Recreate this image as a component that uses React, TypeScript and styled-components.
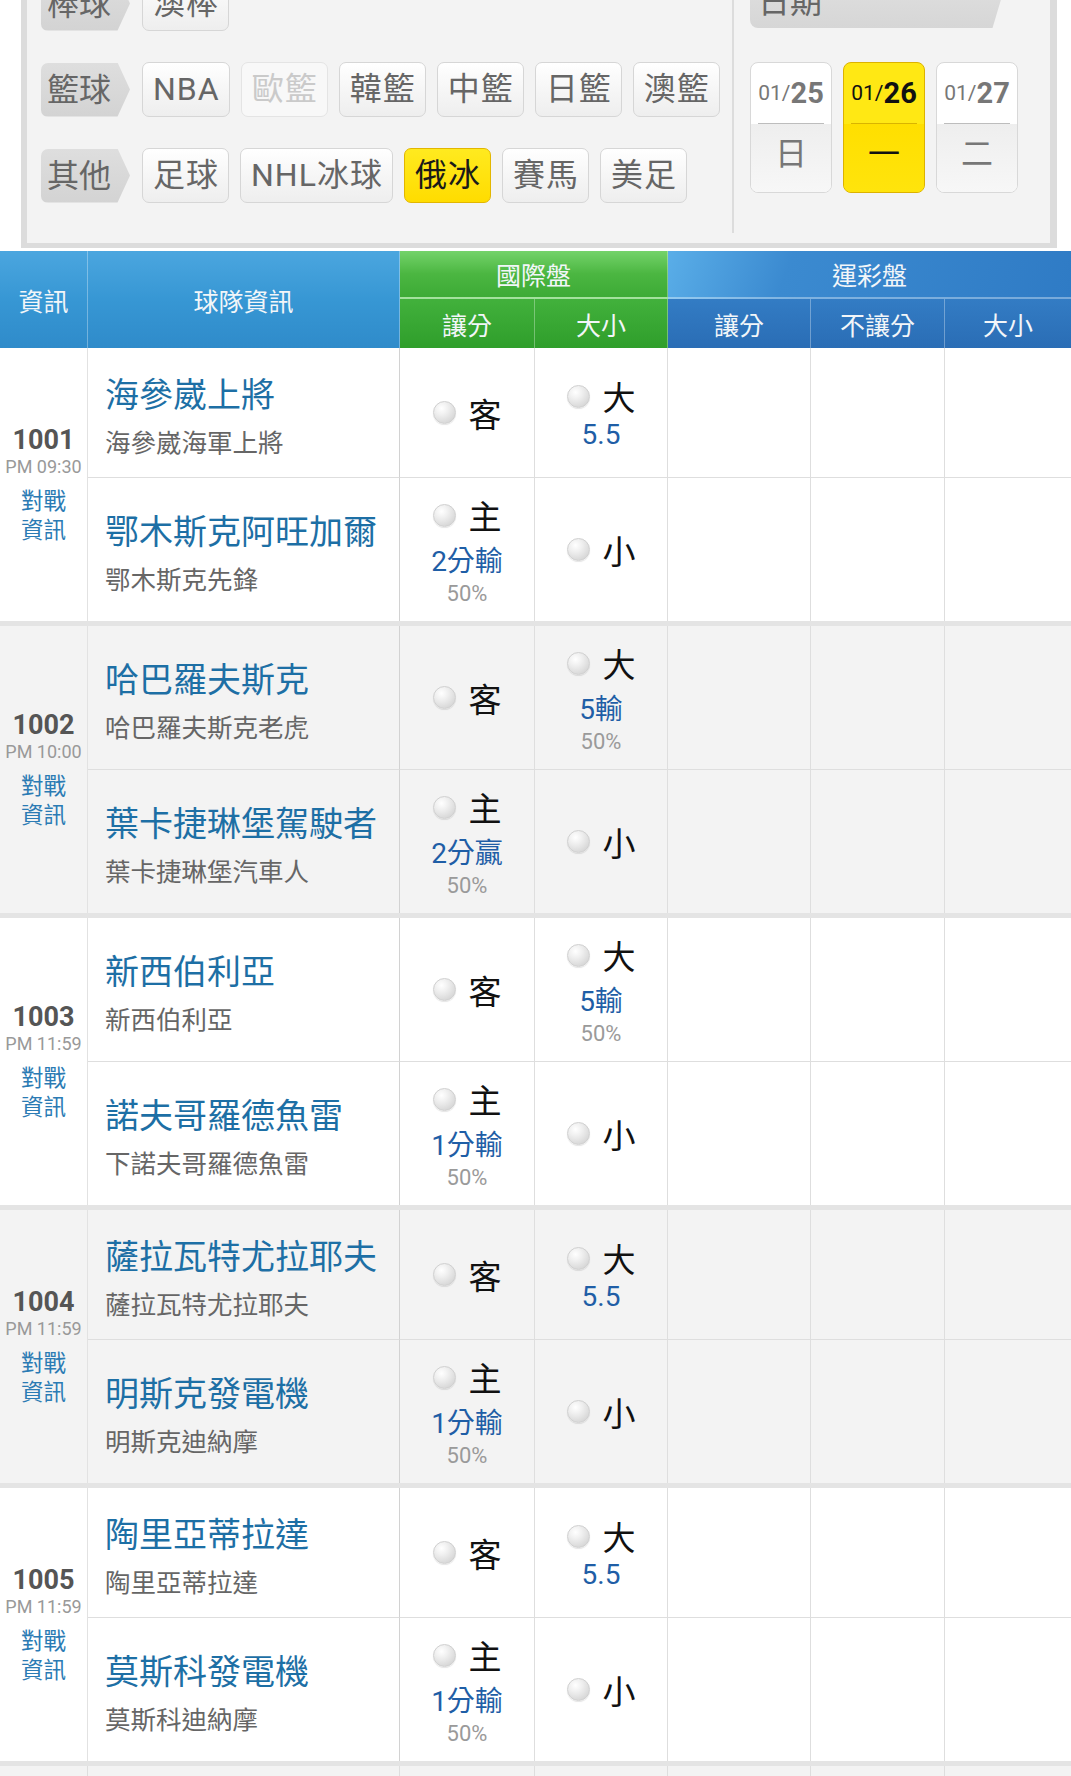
import React from 'react';
import styled, { createGlobalStyle, css } from 'styled-components';

const GlobalStyle = createGlobalStyle`
  html, body {
    margin: 0;
    padding: 0;
    background: #fff;
  }
  body {
    font-family: Roboto, "Noto Sans CJK TC", sans-serif;
    overflow: hidden;
  }
  * {
    box-sizing: border-box;
  }
`;

const COLS = '88px 312px 135px 133px 143px 134px 126px';

type BtnState = 'normal' | 'disabled' | 'active';

const Page = styled.div`
  width: 1071px;
`;

/* ---------- filter panel ---------- */

const FilterPanel = styled.div`
  display: flex;
  margin: -40px 14px 3px 21px;
  padding: 16px 0 10px;
  background: #f3f3f3;
  border-style: solid;
  border-color: #dcdcdc;
  border-width: 0 7px 5px 6px;
`;

const SportArea = styled.div`
  flex: 0 0 705px;
  display: flex;
  flex-direction: column;
  gap: 31px;
  padding: 0 0 30px 14px;
`;

const SportRow = styled.div`
  display: flex;
  align-items: center;
  gap: 11px;
  height: 55px;
`;

const RowLabel = styled.div`
  width: 89px;
  height: 54px;
  margin-right: 1px;
  padding-left: 6px;
  background: linear-gradient(#dedede, #d3d3d3);
  border-radius: 7px 0 0 7px;
  clip-path: polygon(0 0, 86% 0, 100% 50%, 86% 100%, 0 100%);
  color: #666;
  font-size: 32px;
  line-height: 54px;
  white-space: nowrap;
`;

const SportButton = styled.div<{ $state?: BtnState }>`
  height: 55px;
  padding: 0 9px 0 10px;
  border: 1px solid #d6d6d6;
  border-radius: 7px;
  background: linear-gradient(#ffffff, #f6f6f6 50%, #eeeeee);
  color: #666;
  font-size: 32px;
  letter-spacing: 1px;
  line-height: 53px;
  white-space: nowrap;

  ${(p) =>
    p.$state === 'disabled' &&
    css`
      color: #cacaca;
      border-color: #e4e4e4;
      background: #f8f8f8;
    `}

  ${(p) =>
    p.$state === 'active' &&
    css`
      color: #1a1a1a;
      border-color: #e2b600;
      background: linear-gradient(#ffea1f, #ffdc00);
    `}
`;

const DateArea = styled.div`
  flex: 1;
  display: flex;
  flex-direction: column;
  gap: 34px;
  padding-left: 16px;
  border-left: 2px solid #dcdcdc;
`;

const DateLabel = styled.div`
  width: 258px;
  height: 52px;
  padding-left: 8px;
  background: linear-gradient(#e0e0e0, #d6d6d6);
  border-radius: 0 0 0 8px;
  clip-path: polygon(0 0, 100% 0, 94% 100%, 0 100%);
  color: #666;
  font-size: 32px;
  line-height: 52px;
`;

const DateList = styled.div`
  display: flex;
  gap: 11px;
`;

const DateButton = styled.div<{ $active?: boolean }>`
  width: 82px;
  height: 131px;
  display: flex;
  flex-direction: column;
  overflow: hidden;
  border: 1px solid #d8d8d8;
  border-radius: 8px;
  background: #fff;
  color: #777;

  ${(p) =>
    p.$active &&
    css`
      border-color: #dcb200;
      background: #ffe814;
      color: #111;
    `}
`;

const DateTop = styled.div`
  height: 60px;
  display: flex;
  align-items: center;
  justify-content: center;
  font-size: 21px;

  b {
    font-size: 29px;
    font-weight: 700;
    color: inherit;
  }
`;

const DateRule = styled.div<{ $active?: boolean }>`
  height: 1px;
  margin: 0 7px;
  background: ${(p) => (p.$active ? '#d9b400' : '#bdbdbd')};
`;

const DateBottom = styled.div<{ $active?: boolean }>`
  flex: 1;
  display: flex;
  align-items: center;
  justify-content: center;
  padding-bottom: 14px;
  font-size: 32px;
  background: ${(p) =>
    p.$active ? 'linear-gradient(#ffdf00, #ffe40c)' : 'linear-gradient(#eeeeee, #f7f7f7)'};
`;

/* ---------- table ---------- */

type Tone = 'blue' | 'green' | 'greenSub' | 'navy' | 'navySub';

const toneBg: Record<Tone, string> = {
  blue: 'linear-gradient(#4ba6df, #3797d4 50%, #2f8bca)',
  green: 'linear-gradient(#74d36a, #4bb641 50%, #3dab36)',
  greenSub: 'linear-gradient(#42b13c, #2f9e2b)',
  navy: 'linear-gradient(110deg, #5aaee8, #3b8ad0 30%, #2f7bc5)',
  navySub: 'linear-gradient(#337cc4, #2a6db5)',
};

const HeadGrid = styled.div`
  display: grid;
  grid-template-columns: ${COLS};
  grid-template-rows: 48px 49px;
`;

const HeadCell = styled.div<{ $tone: Tone; $span?: string; $rows?: string; $last?: boolean; $top?: boolean }>`
  grid-column: ${(p) => p.$span || 'auto'};
  grid-row: ${(p) => p.$rows || 'auto'};
  display: flex;
  align-items: center;
  justify-content: center;
  background: ${(p) => toneBg[p.$tone]};
  color: #f2f6f9;
  font-size: 25px;
  border-right: ${(p) => (p.$last ? 'none' : '1px solid rgba(255, 255, 255, 0.32)')};
  border-bottom: ${(p) => (p.$top ? '2px solid rgba(255, 255, 255, 0.35)' : 'none')};
`;

const Match = styled.div<{ $alt?: boolean }>`
  display: grid;
  grid-template-columns: ${COLS};
  background: ${(p) => (p.$alt ? '#f3f3f3' : '#ffffff')};
  border-bottom: 5px solid #e4e4e4;
`;

const InfoCell = styled.div`
  grid-row: 1 / span 2;
  display: flex;
  flex-direction: column;
  align-items: center;
  justify-content: center;
  border-right: 1px solid #e2e2e2;
`;

const GameNo = styled.div`
  color: #555;
  font-size: 27px;
  font-weight: 700;
  line-height: 30px;
`;

const GameTime = styled.div`
  color: #999;
  font-size: 18px;
  line-height: 24px;
  white-space: nowrap;
`;

const VersusLink = styled.div`
  margin-top: 8px;
  color: #2b7bb4;
  font-size: 22.5px;
  line-height: 29px;
  text-align: center;
`;

const TeamCell = styled.div<{ $top?: boolean }>`
  padding: 23px 0 14px 17px;
  display: flex;
  flex-direction: column;
  justify-content: center;
  border-right: 1px solid #d2d2d2;
  border-bottom: ${(p) => (p.$top ? '1px solid #dedede' : 'none')};
  white-space: nowrap;
`;

const TeamName = styled.div`
  color: #1d6fa5;
  font-size: 34px;
  line-height: 48px;
`;

const TeamSub = styled.div`
  margin-top: 4px;
  color: #666;
  font-size: 25.5px;
  line-height: 40px;
`;

const OddsCell = styled.div<{ $top?: boolean; $last?: boolean }>`
  display: flex;
  flex-direction: column;
  align-items: center;
  justify-content: center;
  padding: 13px 0 13px;
  border-right: ${(p) => (p.$last ? 'none' : '1px solid #dedede')};
  border-bottom: ${(p) => (p.$top ? '1px solid #dedede' : 'none')};
`;

const PickLine = styled.div<{ $gap?: number }>`
  display: flex;
  align-items: center;
  gap: 13px;
  height: 48px;
  margin-bottom: ${(p) => p.$gap || 0}px;
  color: #111;
  font-size: 33px;
`;

const Radio = styled.span`
  width: 23px;
  height: 23px;
  border-radius: 50%;
  border: 1px solid #d0d0d0;
  background: radial-gradient(circle at 36% 30%, #ffffff 0%, #f1f1f1 30%, #d6d6d6 80%, #c4c4c4 100%);
  box-shadow: 0 1px 1px rgba(0, 0, 0, 0.1);
`;

const LineValue = styled.div`
  color: #1f5ea6;
  font-size: 28px;
  line-height: 36px;
`;

const Percent = styled.div`
  color: #9a9a9a;
  font-size: 22px;
  line-height: 28px;
`;

const TailCell = styled.div<{ $last?: boolean }>`
  height: 60px;
  border-right: ${(p) => (p.$last ? 'none' : '1px solid #dedede')};
`;

/* ---------- data ---------- */

interface Pick {
  label: string;
  line?: string;
  pct?: string;
}

interface Team {
  name: string;
  sub: string;
  spread: Pick;
  total: Pick;
}

interface Game {
  no: string;
  time: string;
  teams: [Team, Team];
}

const games: Game[] = [
  {
    no: '1001',
    time: 'PM 09:30',
    teams: [
      { name: '海參崴上將', sub: '海參崴海軍上將', spread: { label: '客' }, total: { label: '大', line: '5.5' } },
      { name: '鄂木斯克阿旺加爾', sub: '鄂木斯克先鋒', spread: { label: '主', line: '2分輸', pct: '50%' }, total: { label: '小' } },
    ],
  },
  {
    no: '1002',
    time: 'PM 10:00',
    teams: [
      { name: '哈巴羅夫斯克', sub: '哈巴羅夫斯克老虎', spread: { label: '客' }, total: { label: '大', line: '5輸', pct: '50%' } },
      { name: '葉卡捷琳堡駕駛者', sub: '葉卡捷琳堡汽車人', spread: { label: '主', line: '2分贏', pct: '50%' }, total: { label: '小' } },
    ],
  },
  {
    no: '1003',
    time: 'PM 11:59',
    teams: [
      { name: '新西伯利亞', sub: '新西伯利亞', spread: { label: '客' }, total: { label: '大', line: '5輸', pct: '50%' } },
      { name: '諾夫哥羅德魚雷', sub: '下諾夫哥羅德魚雷', spread: { label: '主', line: '1分輸', pct: '50%' }, total: { label: '小' } },
    ],
  },
  {
    no: '1004',
    time: 'PM 11:59',
    teams: [
      { name: '薩拉瓦特尤拉耶夫', sub: '薩拉瓦特尤拉耶夫', spread: { label: '客' }, total: { label: '大', line: '5.5' } },
      { name: '明斯克發電機', sub: '明斯克迪納摩', spread: { label: '主', line: '1分輸', pct: '50%' }, total: { label: '小' } },
    ],
  },
  {
    no: '1005',
    time: 'PM 11:59',
    teams: [
      { name: '陶里亞蒂拉達', sub: '陶里亞蒂拉達', spread: { label: '客' }, total: { label: '大', line: '5.5' } },
      { name: '莫斯科發電機', sub: '莫斯科迪納摩', spread: { label: '主', line: '1分輸', pct: '50%' }, total: { label: '小' } },
    ],
  },
];

const sportRows: { label: string; items: { name: string; state?: BtnState }[] }[] = [
  { label: '棒球', items: [{ name: '澳棒' }] },
  {
    label: '籃球',
    items: [
      { name: 'NBA' },
      { name: '歐籃', state: 'disabled' },
      { name: '韓籃' },
      { name: '中籃' },
      { name: '日籃' },
      { name: '澳籃' },
    ],
  },
  {
    label: '其他',
    items: [
      { name: '足球' },
      { name: 'NHL冰球' },
      { name: '俄冰', state: 'active' },
      { name: '賽馬' },
      { name: '美足' },
    ],
  },
];

const dates = [
  { md: '01/', day: '25', week: '日' },
  { md: '01/', day: '26', week: '一', active: true },
  { md: '01/', day: '27', week: '二' },
];

/* ---------- components ---------- */

const PickBlock: React.FC<{ pick: Pick; top?: boolean; last?: boolean }> = ({ pick, top, last }) => {
  // three-line picks sit a little looser than two-line ones
  const gap = pick.pct ? 5 : pick.line ? -3 : 0;
  return (
    <OddsCell $top={top} $last={last}>
      <PickLine $gap={gap}>
        <Radio />
        {pick.label}
      </PickLine>
      {pick.line && <LineValue>{pick.line}</LineValue>}
      {pick.pct && <Percent>{pick.pct}</Percent>}
    </OddsCell>
  );
};

const GameRows: React.FC<{ game: Game; alt: boolean }> = ({ game, alt }) => (
  <Match $alt={alt}>
    <InfoCell>
      <GameNo>{game.no}</GameNo>
      <GameTime>{game.time}</GameTime>
      <VersusLink>
        對戰
        <br />
        資訊
      </VersusLink>
    </InfoCell>
    {game.teams.map((team, i) => {
      const top = i === 0;
      return (
        <React.Fragment key={team.name}>
          <TeamCell $top={top}>
            <TeamName>{team.name}</TeamName>
            <TeamSub>{team.sub}</TeamSub>
          </TeamCell>
          <PickBlock pick={team.spread} top={top} />
          <PickBlock pick={team.total} top={top} />
          <OddsCell $top={top} />
          <OddsCell $top={top} />
          <OddsCell $top={top} $last />
        </React.Fragment>
      );
    })}
  </Match>
);

const App: React.FC = () => {
  return (
    <Page>
      <GlobalStyle />
      <FilterPanel>
        <SportArea>
          {sportRows.map((row) => (
            <SportRow key={row.label}>
              <RowLabel>{row.label}</RowLabel>
              {row.items.map((item) => (
                <SportButton key={item.name} $state={item.state}>
                  {item.name}
                </SportButton>
              ))}
            </SportRow>
          ))}
        </SportArea>
        <DateArea>
          <DateLabel>日期</DateLabel>
          <DateList>
            {dates.map((d) => (
              <DateButton key={d.day} $active={d.active}>
                <DateTop>
                  {d.md}
                  <b>{d.day}</b>
                </DateTop>
                <DateRule $active={d.active} />
                <DateBottom $active={d.active}>{d.week}</DateBottom>
              </DateButton>
            ))}
          </DateList>
        </DateArea>
      </FilterPanel>

      <HeadGrid>
        <HeadCell $tone="blue" $rows="1 / span 2">資訊</HeadCell>
        <HeadCell $tone="blue" $rows="1 / span 2">球隊資訊</HeadCell>
        <HeadCell $tone="green" $span="3 / span 2" $top>國際盤</HeadCell>
        <HeadCell $tone="navy" $span="5 / span 3" $top $last>運彩盤</HeadCell>
        <HeadCell $tone="greenSub">讓分</HeadCell>
        <HeadCell $tone="greenSub">大小</HeadCell>
        <HeadCell $tone="navySub">讓分</HeadCell>
        <HeadCell $tone="navySub">不讓分</HeadCell>
        <HeadCell $tone="navySub" $last>大小</HeadCell>
      </HeadGrid>

      {games.map((g, i) => (
        <GameRows key={g.no} game={g} alt={i % 2 === 1} />
      ))}
      <Match $alt>
        {Array.from({ length: 7 }).map((_, i) => (
          <TailCell key={i} $last={i === 6} />
        ))}
      </Match>
    </Page>
  );
};

export default App;
